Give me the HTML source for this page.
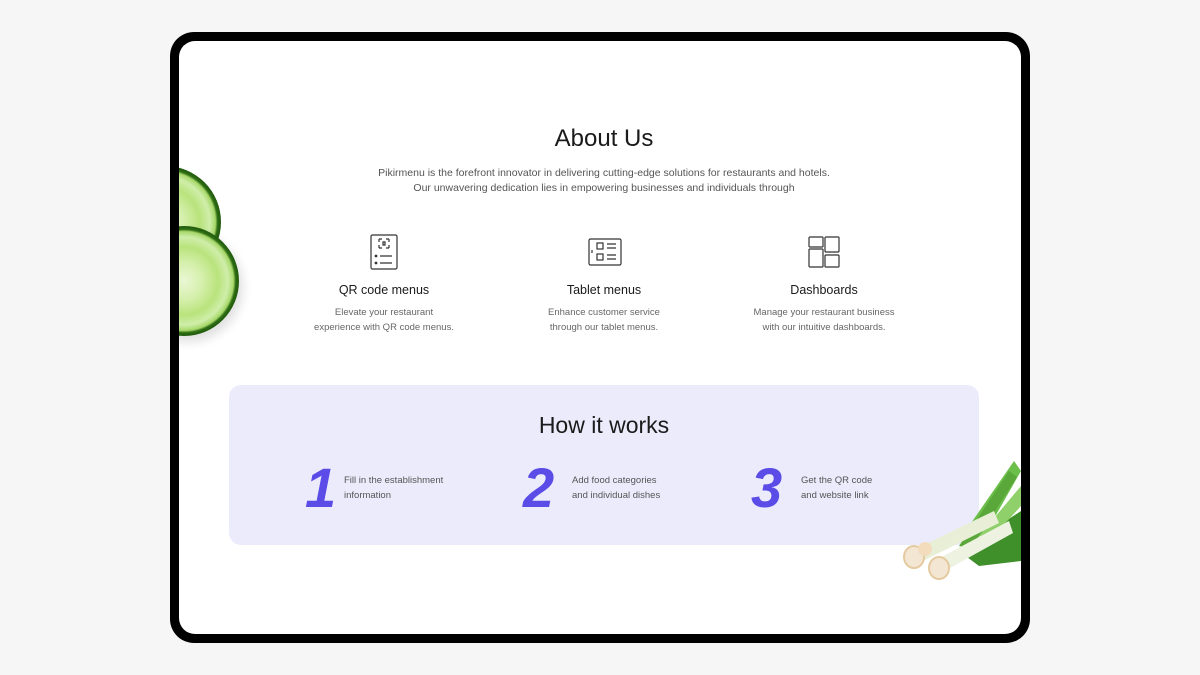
<!DOCTYPE html>
<html><head><meta charset="utf-8"><style>
*{margin:0;padding:0;box-sizing:border-box}
body{width:1200px;height:675px;background:#f6f6f6;font-family:"Liberation Sans",sans-serif;position:relative;overflow:hidden}
.frame{position:absolute;left:170px;top:32px;width:860px;height:611px;background:#000;border-radius:24px}
.screen{position:absolute;left:179px;top:41px;width:842px;height:593px;background:#fff;border-radius:16px;overflow:hidden}
.abs{position:absolute}
h1{position:absolute;left:0;width:850px;text-align:center;top:84px;font-size:24px;font-weight:normal;color:#1a1a1a}
.intro{position:absolute;left:0;width:850px;text-align:center;top:125px;font-size:10.5px;line-height:15px;color:#555}
.feat{position:absolute;width:220px;text-align:center}
.feat h3{font-size:12.5px;font-weight:normal;color:#1a1a1a;margin-top:0}
.feat p{font-size:9.5px;line-height:15px;color:#666;margin-top:8px}
.card{position:absolute;left:50px;top:344px;width:750px;height:160px;background:#ebebfc;border-radius:12px}
.card h2{position:absolute;left:0;width:750px;text-align:center;top:27px;font-size:23px;font-weight:normal;color:#1a1a1a}
.num{position:absolute;font-size:56px;font-weight:bold;font-style:italic;color:#5b4ce8;top:70px}
.st{position:absolute;font-size:9.5px;line-height:15px;color:#555;top:88px}
.cuc{border-radius:50%;background:radial-gradient(circle closest-side,#eaf7d4 0,#d4efaa 35%,#b9e37c 62%,#cfeeaa 80%,#a7d86a 90%,#2e6d14 94%,#1f5a0c 100%)}
</style></head><body>
<div class="frame"></div>
<div class="screen">
<div class="abs cuc" style="left:-70px;top:125px;width:112px;height:112px;"></div>
<div class="abs cuc" style="left:-50px;top:185px;width:110px;height:110px;box-shadow:4px 6px 10px rgba(0,0,0,.12)"></div>
<h1>About Us</h1>
<div class="intro">Pikirmenu is the forefront innovator in delivering cutting-edge solutions for restaurants and hotels.<br>Our unwavering dedication lies in empowering businesses and individuals through</div>

<svg class="abs" style="left:191px;top:193px" width="28" height="36" viewBox="0 0 28 36" fill="none" stroke="#333" stroke-width="1.2"><rect x="1" y="1" width="26" height="34" rx="1.5"/><path d="M9 5h3M9 5v3M19 5h-3M19 5v3M9 14h3M9 14v-3M19 14h-3M19 14v-3M13 8h2v3h-2z"/><circle cx="6" cy="22" r=".8" fill="#333"/><circle cx="6" cy="29" r=".8" fill="#333"/><path d="M10 22h12M10 29h12"/></svg>
<svg class="abs" style="left:409px;top:197px" width="34" height="28" viewBox="0 0 34 28" fill="none" stroke="#333" stroke-width="1.2"><rect x="1" y="1" width="32" height="26" rx="1.5"/><rect x="9" y="5" width="6" height="6"/><rect x="9" y="16" width="6" height="6"/><path d="M19 6h9M19 10h9M19 17h9M19 21h9M4 12v3"/></svg>
<svg class="abs" style="left:629px;top:195px" width="34" height="32" viewBox="0 0 34 32" fill="none" stroke="#333" stroke-width="1.2"><rect x="1" y="1" width="14" height="10" rx="1"/><rect x="17" y="1" width="14" height="15" rx="1"/><rect x="1" y="13" width="14" height="18" rx="1"/><rect x="17" y="19" width="14" height="12" rx="1"/></svg>

<div class="feat" style="left:95px;top:242px"><h3>QR code menus</h3><p>Elevate your restaurant<br>experience with QR code menus.</p></div>
<div class="feat" style="left:315px;top:242px"><h3>Tablet menus</h3><p>Enhance customer service<br>through our tablet menus.</p></div>
<div class="feat" style="left:535px;top:242px"><h3>Dashboards</h3><p>Manage your restaurant business<br>with our intuitive dashboards.</p></div>

<div class="card"><h2>How it works</h2>
<div class="num" style="left:76px">1</div><div class="st" style="left:115px">Fill in the establishment<br>information</div>
<div class="num" style="left:294px">2</div><div class="st" style="left:343px">Add food categories<br>and individual dishes</div>
<div class="num" style="left:522px">3</div><div class="st" style="left:572px">Get the QR code<br>and website link</div>
</div>

<svg class="abs" style="left:720px;top:410px" width="122" height="130" viewBox="0 0 122 130">
<path d="M60 100 L122 60 L122 110 L80 115 Z" fill="#3f8f2a"/>
<path d="M70 75 L115 10 L122 20 L85 85 Z" fill="#6cbf4a"/>
<path d="M80 85 L122 35 L122 55 L90 90 Z" fill="#8fd06a"/>
<path d="M60 95 L110 20 L118 26 L72 98 Z" fill="#5aa83a"/>
<path d="M12 100 L95 60 L100 72 L20 112 Z" fill="#e8efd6"/>
<path d="M35 110 L110 70 L114 82 L42 122 Z" fill="#eef2e0"/>
<ellipse cx="15" cy="106" rx="10" ry="11" fill="#f3e7d3" stroke="#e5caa0" stroke-width="2"/>
<ellipse cx="40" cy="117" rx="10" ry="11" fill="#f3e7d3" stroke="#e5caa0" stroke-width="2"/>
<ellipse cx="26" cy="98" rx="7" ry="7" fill="#f2dcbc"/>
</svg>
</div>
</body></html>
